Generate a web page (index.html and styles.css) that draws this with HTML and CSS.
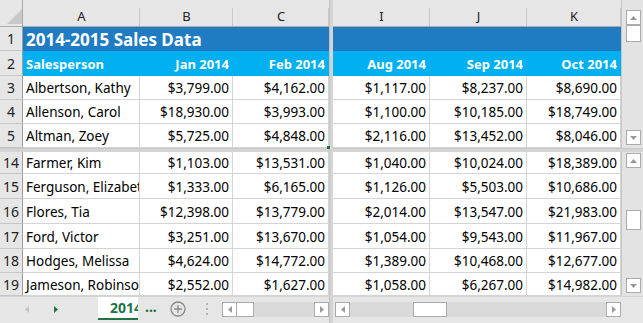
FILE: index.html
```html
<!DOCTYPE html>
<html lang="en">
<head>
    <meta charset="UTF-8">
    <title>2014-2015 Sales Data</title>
    <link rel="stylesheet" href="styles.css">
</head>
<body>
<div class="sheet">
    <div class="grid">
        <!-- frozen split bars and scrollbars -->
        <div class="vsplit"></div>
        <div class="hsplit left"></div>
        <div class="hsplit right"></div>
        <div class="vscroll top">
            <div class="sb-btn"><svg width="7" height="4"><polygon points="0,4 7,4 3.5,0" fill="#999"/></svg></div>
            <div class="sb-thumb tall"></div>
            <div class="sb-fill"></div>
            <div class="sb-btn"><svg width="7" height="4"><polygon points="0,0 7,0 3.5,4" fill="#999"/></svg></div>
        </div>
        <div class="vscroll bottom">
            <div class="sb-btn"><svg width="7" height="4"><polygon points="0,4 7,4 3.5,0" fill="#999"/></svg></div>
            <div class="sb-thumb low"></div>
            <div class="sb-fill"></div>
            <div class="sb-btn"><svg width="7" height="4"><polygon points="0,0 7,0 3.5,4" fill="#999"/></svg></div>
        </div>

        <!-- column headers -->
        <div class="corner"><svg width="23" height="26"><polygon points="7,24 22,24 22,9" fill="#c9c9c9"/></svg></div>
        <div class="col-head">A</div>
        <div class="col-head">B</div>
        <div class="col-head">C</div>
        <div class="col-head">I</div>
        <div class="col-head">J</div>
        <div class="col-head">K</div>

        <!-- row 1 -->
        <div class="row-head">1</div>
        <div class="title">2014-2015 Sales Data</div>
        <div class="title"></div>

        <!-- row 2 -->
        <div class="row-head">2</div>
        <div class="cell sub">Salesperson</div>
        <div class="cell sub num">Jan 2014</div>
        <div class="cell sub num">Feb 2014</div>
        <div class="cell sub num">Aug 2014</div>
        <div class="cell sub num">Sep 2014</div>
        <div class="cell sub num">Oct 2014</div>

        <div class="row-head">3</div>
        <div class="cell">Albertson, Kathy</div>
        <div class="cell num">$3,799.00</div>
        <div class="cell num">$4,162.00</div>
        <div class="cell num">$1,117.00</div>
        <div class="cell num">$8,237.00</div>
        <div class="cell num">$8,690.00</div>

        <div class="row-head">4</div>
        <div class="cell">Allenson, Carol</div>
        <div class="cell num">$18,930.00</div>
        <div class="cell num">$3,993.00</div>
        <div class="cell num">$1,100.00</div>
        <div class="cell num">$10,185.00</div>
        <div class="cell num">$18,749.00</div>

        <div class="row-head">5</div>
        <div class="cell">Altman, Zoey</div>
        <div class="cell num">$5,725.00</div>
        <div class="cell num handle">$4,848.00</div>
        <div class="cell num">$2,116.00</div>
        <div class="cell num">$13,452.00</div>
        <div class="cell num">$8,046.00</div>

        <div class="row-head">14</div>
        <div class="cell">Farmer, Kim</div>
        <div class="cell num">$1,103.00</div>
        <div class="cell num">$13,531.00</div>
        <div class="cell num">$1,040.00</div>
        <div class="cell num">$10,024.00</div>
        <div class="cell num">$18,389.00</div>

        <div class="row-head">15</div>
        <div class="cell">Ferguson, Elizabeth</div>
        <div class="cell num">$1,333.00</div>
        <div class="cell num">$6,165.00</div>
        <div class="cell num">$1,126.00</div>
        <div class="cell num">$5,503.00</div>
        <div class="cell num">$10,686.00</div>

        <div class="row-head">16</div>
        <div class="cell">Flores, Tia</div>
        <div class="cell num">$12,398.00</div>
        <div class="cell num">$13,779.00</div>
        <div class="cell num">$2,014.00</div>
        <div class="cell num">$13,547.00</div>
        <div class="cell num">$21,983.00</div>

        <div class="row-head">17</div>
        <div class="cell">Ford, Victor</div>
        <div class="cell num">$3,251.00</div>
        <div class="cell num">$13,670.00</div>
        <div class="cell num">$1,054.00</div>
        <div class="cell num">$9,543.00</div>
        <div class="cell num">$11,967.00</div>

        <div class="row-head">18</div>
        <div class="cell">Hodges, Melissa</div>
        <div class="cell num">$4,624.00</div>
        <div class="cell num">$14,772.00</div>
        <div class="cell num">$1,389.00</div>
        <div class="cell num">$10,468.00</div>
        <div class="cell num">$12,677.00</div>

        <div class="row-head">19</div>
        <div class="cell">Jameson, Robinson</div>
        <div class="cell num">$2,552.00</div>
        <div class="cell num">$1,627.00</div>
        <div class="cell num">$1,058.00</div>
        <div class="cell num">$6,267.00</div>
        <div class="cell num">$14,982.00</div>
    </div>

    <div class="tabbar">
        <div class="nav">
            <svg width="4" height="7"><polygon points="4,0 4,7 0,3.5" fill="#c4c4c4"/></svg>
            <svg width="4" height="7"><polygon points="0,0 0,7 4,3.5" fill="#217346"/></svg>
        </div>
        <div class="tab">2014</div>
        <div class="more">...</div>
        <div class="add">
            <svg width="16" height="16"><circle cx="8" cy="8" r="7" fill="none" stroke="#8a8a8a" stroke-width="1.3"/><path d="M8 4v8M4 8h8" stroke="#8a8a8a" stroke-width="1.3"/></svg>
        </div>
        <div class="dots"><span></span><span></span><span></span></div>
        <div class="hscroll first">
            <div class="sb-btn"><svg width="4" height="7"><polygon points="4,0 4,7 0,3.5" fill="#999"/></svg></div>
            <div class="sb-thumb short"></div>
            <div class="sb-fill"></div>
            <div class="sb-btn"><svg width="4" height="7"><polygon points="0,0 0,7 4,3.5" fill="#999"/></svg></div>
        </div>
        <div class="bar-split"></div>
        <div class="hscroll second">
            <div class="sb-btn"><svg width="4" height="7"><polygon points="4,0 4,7 0,3.5" fill="#999"/></svg></div>
            <div class="sb-thumb wide"></div>
            <div class="sb-fill"></div>
            <div class="sb-btn"><svg width="4" height="7"><polygon points="0,0 0,7 4,3.5" fill="#999"/></svg></div>
        </div>
    </div>
</div>
</body>
</html>
```

FILE: styles.css
```css
* {
    box-sizing: border-box;
}
body {
    margin: 0;
    overflow: hidden;
    font-family: "Noto Sans", "Open Sans", sans-serif;
    font-size: 13px;
    color: #000;
    background: #e6e6e6;
}
.sheet {
    width: 643px;
    height: 323px;
    display: flex;
    flex-direction: column;
}
.grid {
    display: grid;
    grid-template-columns: 23px 117px 93px 96px 4px 97px 97px 94px 22px;
    grid-template-rows: 27px 24px 25px 24px 24px 24px 4px 22px 25px 25px 25px 24px 23px;
    background: #fff;
}
.vsplit {
    grid-column: 5;
    grid-row: 1 / -1;
    background: #d4d4d4;
    border-left: 1px solid #c4c4c4;
}
.hsplit {
    grid-row: 7;
    background: #d4d4d4;
    border-top: 1px solid #c8c8c8;
}
.hsplit.left {
    grid-column: 1 / 5;
}
.hsplit.right {
    grid-column: 6 / 10;
}

/* scrollbars */
.vscroll {
    grid-column: 9;
    background: #e3e3e3;
    border-left: 1px solid #c6c6c6;
    display: flex;
    flex-direction: column;
    align-items: center;
}
.vscroll.top {
    grid-row: 1 / 7;
    padding: 10px 0 3px 2px;
}
.vscroll.bottom {
    grid-row: 8 / 14;
    padding: 1px 0 3px 2px;
}
.sb-btn {
    width: 15px;
    height: 15px;
    flex: none;
    background: #fff;
    border: 1px solid #ababab;
    display: flex;
    align-items: center;
    justify-content: center;
}
.sb-thumb {
    flex: none;
    background: #fff;
    border: 1px solid #ababab;
}
.sb-thumb.tall {
    width: 15px;
    height: 17px;
}
.sb-thumb.low {
    width: 15px;
    height: 20px;
    margin-top: 42px;
}
.sb-fill {
    flex: 1;
}

/* headers */
.corner {
    background: #e6e6e6;
    border-right: 1px solid #ababab;
    border-bottom: 1px solid #ababab;
}
.corner svg {
    display: block;
}
.col-head {
    background: #e6e6e6 linear-gradient(#c8c8c8, #c8c8c8) right 8px / 1px 19px no-repeat;
    border-bottom: 1px solid #ababab;
    padding-top: 7px;
    text-align: center;
    line-height: 19px;
    color: #222;
}
.row-head {
    background: #e6e6e6;
    border-right: 1px solid #9e9e9e;
    border-bottom: 1px solid #c6c6c6;
    display: flex;
    align-items: center;
    justify-content: center;
    font-size: 14px;
    color: #222;
}

/* cells */
.cell {
    border-right: 1px solid #d4d4d4;
    border-bottom: 1px solid #d4d4d4;
    padding: 1px 3px 0 3px;
    display: flex;
    align-items: center;
    white-space: nowrap;
    overflow: hidden;
    font-size: 13.5px;
}
.cell.num {
    justify-content: flex-end;
}
.title {
    grid-column: span 3;
    background: #1f7bc2;
    color: #fff;
    font-weight: bold;
    font-size: 17px;
    padding: 1px 3px 0 3px;
    display: flex;
    align-items: center;
    white-space: nowrap;
}
.cell.sub {
    background: #00b0f0;
    border-color: #00b0f0;
    color: #fff;
    font-weight: bold;
    font-size: 13px;
}
.handle {
    position: relative;
    overflow: visible;
}
.handle::after {
    content: "";
    position: absolute;
    right: -2px;
    bottom: -2px;
    width: 3px;
    height: 3px;
    background: #217346;
}

/* sheet tabs */
.tabbar {
    flex: 1;
    display: flex;
    background: #e6e6e6;
    border-top: 1px solid #d4d4d4;
}
.nav {
    width: 98px;
    height: 24px;
    display: flex;
    align-items: center;
    padding-left: 25px;
    gap: 25px;
}
.nav svg {
    display: block;
}
.tab {
    width: 40px;
    height: 23px;
    background: #fff;
    border-bottom: 2px solid #217346;
    padding-left: 12px;
    overflow: hidden;
    white-space: nowrap;
    color: #217346;
    font-weight: bold;
    font-size: 14px;
    line-height: 21px;
}
.more {
    margin-left: 7px;
    width: 12px;
    color: #217346;
    font-weight: bold;
    font-size: 14px;
    line-height: 20px;
}
.add {
    margin-left: 13px;
    width: 16px;
    padding-top: 4px;
}
.add svg {
    display: block;
}
.dots {
    margin-left: 20px;
    width: 2px;
    padding-top: 6px;
    display: flex;
    flex-direction: column;
    gap: 3px;
}
.dots span {
    width: 2px;
    height: 2px;
    background: #b4b4b4;
}
.hscroll {
    height: 15px;
    margin-top: 5px;
    display: flex;
    background: #dadada;
}
.hscroll.first {
    margin-left: 14px;
    width: 107px;
}
.hscroll.second {
    margin-left: 2px;
    width: 286px;
}
.sb-thumb.short {
    width: 17px;
    height: 15px;
    border-left: none;
}
.sb-thumb.wide {
    width: 34px;
    height: 15px;
    margin-left: 63px;
}
.bar-split {
    width: 4px;
    margin-top: -1px;
    background: #d4d4d4;
    border-left: 1px solid #c4c4c4;
}
```
